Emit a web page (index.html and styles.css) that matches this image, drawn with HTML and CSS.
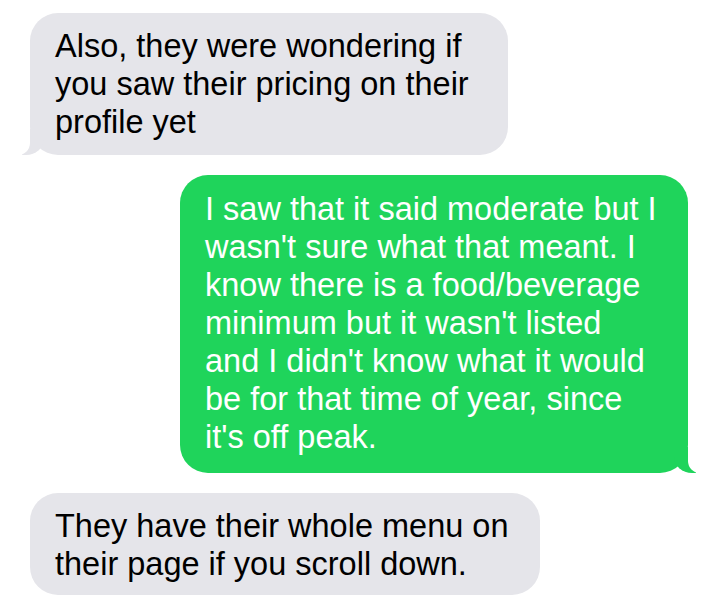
FILE: index.html
```html
<!DOCTYPE html>
<html lang="en">
<head>
  <meta charset="UTF-8" />
  <meta name="viewport" content="width=device-width, initial-scale=1.0"/>
  <title>Messages</title>
  <link rel="stylesheet" href="styles.css">
</head>
<body>
  <div class="thread">
    <div class="bubble in first">
      Also, they were wondering if<br>
      you saw their pricing on their<br>
      profile yet
    </div>

    <div class="bubble out">
      I saw that it said moderate but I<br>
      wasn't sure what that meant. I<br>
      know there is a food/beverage<br>
      minimum but it wasn't listed<br>
      and I didn't know what it would<br>
      be for that time of year, since<br>
      it's off peak.
    </div>

    <div class="bubble in last">
      They have their whole menu on<br>
      their page if you scroll down.
    </div>
  </div>
</body>
</html>
```

FILE: styles.css
```css
body {
  margin: 0;
  background: #fff;
  font-family: "Liberation Sans", Arial, sans-serif;
}

.thread {
  display: flex;
  flex-direction: column;
  gap: 20px;
  padding-top: 13px;
}

.bubble {
  position: relative;
  box-sizing: border-box;
  font-size: 32.5px;
  line-height: 38px;
  border-radius: 28px;
  padding: 15px 20px 17px 25px;
}

.in {
  align-self: flex-start;
  margin-left: 30px;
  background: #e5e5ea;
  color: #000;
}

.out {
  align-self: flex-end;
  margin-right: 32px;
  width: 508px;
  background: #1fd45b;
  color: #fff;
}

.first {
  width: 478px;
  padding-top: 14px;
  padding-bottom: 14px;
}

.last {
  width: 510px;
  padding-top: 14px;
  padding-bottom: 12px;
}

/* tails */
.first::before,
.out::before {
  content: "";
  position: absolute;
  bottom: 0;
  width: 22px;
  height: 26px;
}

.first::after,
.out::after {
  content: "";
  position: absolute;
  bottom: 0;
  width: 24px;
  height: 26px;
  background: #fff;
}

.first::before {
  left: -8px;
  background: #e5e5ea;
  border-bottom-right-radius: 18px 16px;
}

.first::after {
  left: -24px;
  border-bottom-right-radius: 12px;
}

.out::before {
  right: -8px;
  background: #1fd45b;
  border-bottom-left-radius: 18px 16px;
}

.out::after {
  right: -24px;
  border-bottom-left-radius: 12px;
}
```
